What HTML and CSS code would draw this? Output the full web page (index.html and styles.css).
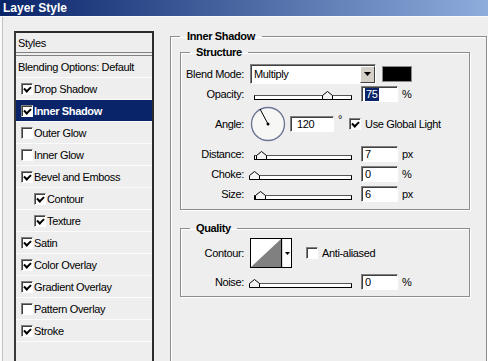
FILE: index.html
```html
<!DOCTYPE html>
<html lang="en">
<head>
    <meta charset="UTF-8">
    <title>Layer Style</title>
    <link rel="stylesheet" href="styles.css">
</head>
<body>
    <div class="titlebar">Layer Style</div>
    <div class="dialog">
        <div class="styles-list">
            <div class="item head">Styles</div>
            <div class="item plain">Blending Options: Default</div>
            <div class="item"><span class="cb on"></span>Drop Shadow</div>
            <div class="item selected"><span class="cb on"></span>Inner Shadow</div>
            <div class="item"><span class="cb"></span>Outer Glow</div>
            <div class="item"><span class="cb"></span>Inner Glow</div>
            <div class="item"><span class="cb on"></span>Bevel and Emboss</div>
            <div class="item sub"><span class="cb on"></span>Contour</div>
            <div class="item sub"><span class="cb on"></span>Texture</div>
            <div class="item"><span class="cb on"></span>Satin</div>
            <div class="item"><span class="cb on"></span>Color Overlay</div>
            <div class="item"><span class="cb on"></span>Gradient Overlay</div>
            <div class="item"><span class="cb"></span>Pattern Overlay</div>
            <div class="item"><span class="cb on"></span>Stroke</div>
        </div>

        <fieldset class="group panel">
            <legend>Inner Shadow</legend>

            <fieldset class="group structure">
                <legend>Structure</legend>
                <div class="field blend">
                    <label>Blend Mode:</label>
                    <div class="select">
                        <span class="val">Multiply</span>
                        <span class="drop">
                            <svg width="7" height="4" viewBox="0 0 7 4"><path d="M0 0H7L3.5 4Z" fill="#000"/></svg>
                        </span>
                    </div>
                    <span class="swatch"></span>
                </div>
                <div class="field">
                    <label>Opacity:</label>
                    <div class="slider">
                        <span class="track"></span>
                        <svg class="thumb" style="left:72px" width="11" height="9" viewBox="0 0 11 9"><path d="M0.5 8.5V4.5L5.5 0.5L10.5 4.5V8.5Z" fill="#f4f4f4" stroke="#000"/></svg>
                    </div>
                    <span class="num"><span class="hl">75</span></span>
                    <span class="unit">%</span>
                </div>
                <div class="field angle">
                    <label>Angle:</label>
                    <svg class="dial" width="36" height="36" viewBox="0 0 36 36">
                        <circle cx="18" cy="18" r="16.5" fill="#f7f7f5" stroke="#6b7794" stroke-width="1.4"/>
                        <line x1="18" y1="18" x2="10" y2="3" stroke="#000" stroke-width="1"/>
                        <circle cx="18" cy="18" r="1.5" fill="#000"/>
                    </svg>
                    <span class="num wide">120</span>
                    <span class="unit deg">°</span>
                    <span class="cb on global"></span>
                    <span>Use Global Light</span>
                </div>
                <div class="field">
                    <label>Distance:</label>
                    <div class="slider">
                        <span class="track"></span>
                        <svg class="thumb" style="left:6px" width="11" height="9" viewBox="0 0 11 9"><path d="M0.5 8.5V4.5L5.5 0.5L10.5 4.5V8.5Z" fill="#f4f4f4" stroke="#000"/></svg>
                    </div>
                    <span class="num">7</span>
                    <span class="unit">px</span>
                </div>
                <div class="field">
                    <label>Choke:</label>
                    <div class="slider">
                        <span class="track"></span>
                        <svg class="thumb" style="left:-1px" width="11" height="9" viewBox="0 0 11 9"><path d="M0.5 8.5V4.5L5.5 0.5L10.5 4.5V8.5Z" fill="#f4f4f4" stroke="#000"/></svg>
                    </div>
                    <span class="num">0</span>
                    <span class="unit">%</span>
                </div>
                <div class="field">
                    <label>Size:</label>
                    <div class="slider">
                        <span class="track"></span>
                        <svg class="thumb" style="left:5px" width="11" height="9" viewBox="0 0 11 9"><path d="M0.5 8.5V4.5L5.5 0.5L10.5 4.5V8.5Z" fill="#f4f4f4" stroke="#000"/></svg>
                    </div>
                    <span class="num">6</span>
                    <span class="unit">px</span>
                </div>
            </fieldset>

            <fieldset class="group quality">
                <legend>Quality</legend>
                <div class="field contour-row">
                    <label>Contour:</label>
                    <div class="contour">
                        <svg class="curve" width="30" height="28" viewBox="0 0 30 28"><path d="M0 28L30 0V28Z" fill="#808080"/></svg>
                        <span class="cdrop">
                            <svg width="5" height="3" viewBox="0 0 5 3"><path d="M0 0H5L2.5 3Z" fill="#000"/></svg>
                        </span>
                    </div>
                    <span class="cb aa"></span>
                    <span>Anti-aliased</span>
                </div>
                <div class="field">
                    <label>Noise:</label>
                    <div class="slider">
                        <span class="track"></span>
                        <svg class="thumb" style="left:-1px" width="11" height="9" viewBox="0 0 11 9"><path d="M0.5 8.5V4.5L5.5 0.5L10.5 4.5V8.5Z" fill="#f4f4f4" stroke="#000"/></svg>
                    </div>
                    <span class="num">0</span>
                    <span class="unit">%</span>
                </div>
            </fieldset>
        </fieldset>
    </div>
</body>
</html>
```

FILE: styles.css
```css
* {
    box-sizing: border-box;
}

html, body {
    margin: 0;
    padding: 0;
}

body {
    width: 488px;
    height: 361px;
    overflow: hidden;
    background: #eeeeee;
    font-family: "Liberation Sans", Arial, sans-serif;
    font-size: 11px;
    letter-spacing: -0.35px;
    color: #000;
}

.titlebar {
    height: 16px;
    line-height: 16px;
    padding-left: 3px;
    color: #fff;
    font-weight: bold;
    font-size: 12px;
    letter-spacing: 0;
    background: linear-gradient(to right, #0a246a, #8eacdc);
}

.dialog {
    display: flex;
    align-items: flex-start;
    gap: 16px;
    height: 345px;
    padding: 12px 0 0 14px;
    border-top: 1px solid #fafafa;
    box-shadow: inset 2px 0 0 #fafafa, inset 3px 0 0 #c2c2c2;
}

/* left list of effects */
.styles-list {
    flex: none;
    width: 140px;
    height: 340px;
    margin-top: 2px;
    border: 2px solid #2b2b2b;
    border-left-color: #3a3a3a;
}

.item {
    display: flex;
    align-items: center;
    height: 22px;
    padding-left: 5px;
    border-bottom: 1px solid #fbfbfb;
    white-space: nowrap;
}

.item.head {
    height: 23px;
    padding-left: 2px;
    border-bottom: 4px double #808080;
}

.item.plain {
    padding-left: 2px;
}

.item.sub {
    padding-left: 18px;
}

.item.selected {
    background: #0a246a;
    color: #fff;
    font-weight: bold;
}

.cb {
    position: relative;
    flex: none;
    width: 12px;
    height: 12px;
    margin-right: 1px;
    background: #fff;
    border: 1px solid;
    border-color: #808080 #fff #fff #808080;
    box-shadow: inset 1px 1px 0 #404040;
}

.cb.on::after {
    content: "";
    position: absolute;
    left: 3px;
    top: 1px;
    width: 3px;
    height: 5px;
    border: solid #000;
    border-width: 0 2px 2px 0;
    transform: rotate(45deg);
}

/* group boxes */
.group {
    margin: 0;
    min-width: 0;
    border: 1px solid #8d8d8d;
    box-shadow: inset 1px 1px 0 #fff, 1px 1px 0 #fff;
}

.group > legend {
    padding: 0 6px;
    margin-left: 9px;
    line-height: 14px;
    font-weight: bold;
}

.panel {
    flex: none;
    width: 317px;
    height: 340px;
    padding: 2px 16px 0 9px;
}

.panel > legend {
    margin-left: 0;
    padding: 0 7px;
}

.structure {
    padding: 4px 0 5px 0;
}

.quality {
    margin-top: 11px;
    padding: 3px 0 4px 0;
}

.field {
    display: flex;
    align-items: center;
    height: 20px;
    white-space: nowrap;
}

.field > label {
    flex: none;
    width: 63px;
    margin-right: 6px;
    text-align: right;
}

.field.blend {
    height: 21px;
}

.field.angle {
    height: 40px;
}

.field.contour-row {
    height: 30px;
    margin-bottom: 4px;
}

/* blend mode dropdown */
.select {
    display: flex;
    width: 126px;
    height: 20px;
    background: #fff;
    border: 1px solid;
    border-color: #808080 #fff #fff #808080;
    box-shadow: inset 1px 1px 0 #404040;
}

.select .val {
    flex: 1;
    padding: 1px 0 0 3px;
    line-height: 16px;
}

.select .drop {
    display: flex;
    align-items: center;
    justify-content: center;
    width: 15px;
    margin: 1px 0 0 0;
    background: #d4d0c8;
    border: 1px solid;
    border-color: #fff #404040 #404040 #fff;
}

.swatch {
    width: 30px;
    height: 16px;
    margin-left: 6px;
    background: #000;
    border: 1px solid #8a8a8a;
}

/* sliders */
.slider {
    position: relative;
    flex: none;
    display: flex;
    align-items: flex-end;
    width: 104px;
    height: 12px;
    margin-right: 7px;
}

.track {
    width: 98px;
    height: 5px;
    margin-left: 4px;
    background: #fff;
    border: 1px solid #000;
    border-top-color: #555;
}

.thumb {
    position: absolute;
    bottom: 0;
}

.num {
    flex: none;
    width: 37px;
    height: 16px;
    padding: 1px 0 0 3px;
    line-height: 13px;
    background: #fff;
    border: 1px solid;
    border-color: #808080 #fff #fff #808080;
    box-shadow: inset 1px 1px 0 #404040;
}

.num.wide {
    width: 44px;
    margin-left: 4px;
    padding-left: 6px;
}

.hl {
    display: inline-block;
    padding: 0 1px;
    background: #0a246a;
    color: #fff;
}

.unit {
    margin-left: 4px;
}

.unit.deg {
    margin-left: 4px;
    margin-right: 7px;
    align-self: flex-start;
    margin-top: 9px;
}

.cb.global {
    margin-right: 4px;
}

/* contour picker */
.contour {
    display: flex;
    width: 42px;
    height: 30px;
    background: #fff;
    border: 1px solid #000;
}

.curve {
    border-right: 1px solid #000;
    width: 31px;
    height: 28px;
}

.cdrop {
    display: flex;
    align-items: center;
    justify-content: center;
    flex: 1;
    border-left: 1px solid #d8d8d8;
}

.cb.aa {
    margin-left: 14px;
    margin-right: 4px;
}
```
